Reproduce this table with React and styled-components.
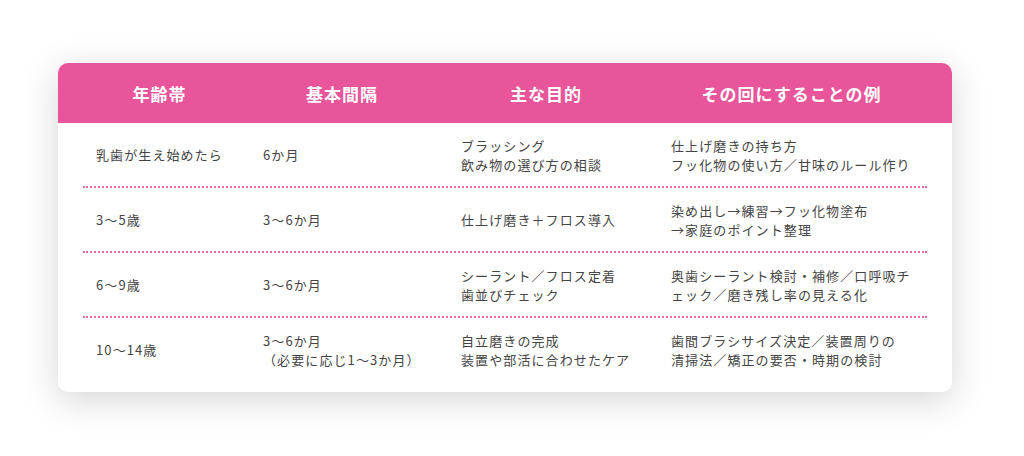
import React from 'react';
import styled, { createGlobalStyle } from 'styled-components';

const GlobalStyle = createGlobalStyle`
    html, body {
        margin: 0;
        padding: 0;
        background: #ffffff;
    }
    body {
        font-family: "Noto Sans CJK JP", "Noto Sans", sans-serif;
        color: #444444;
    }
`

const Page = styled.main`
    width: 1024px;
    height: 456px;
    padding: 63px 0 0 58px;
    box-sizing: border-box;
`

const Card = styled.section`
    width: 894px;
    background: #ffffff;
    border-radius: 10px;
    overflow: hidden;
    box-shadow: 0 8px 36px rgba(0, 0, 0, 0.17);
    padding-bottom: 11px;
`

const COLUMNS = '167px 198px 210px 269px';

const Header = styled.div`
    background: #e8559a;
    height: 60px;
    display: grid;
    grid-template-columns: ${COLUMNS};
    padding: 0 25px;
    align-items: center;
`

const HeadCell = styled.div`
    color: #ffffff;
    font-size: 17px;
    font-weight: 700;
    letter-spacing: 1px;
    text-align: center;
    padding-right: ${p => p.$shift || 0}px;
`

const Body = styled.div`
    padding: 0 25px;
`

const Row = styled.div`
    display: grid;
    grid-template-columns: ${COLUMNS};
    align-items: center;
    padding: 12.5px 0;
    min-height: 38px;
    border-bottom: ${p => p.$last ? 'none' : '2px dotted #e46aa8'};
`

const Cell = styled.div`
    font-size: 13px;
    letter-spacing: 1.1px;
    line-height: 19px;
    padding-left: 13px;
    white-space: nowrap;
    color: #444444;
`

const heads = [
    { label: '年齢帯', shift: 14 },
    { label: '基本間隔', shift: 14 },
    { label: '主な目的', shift: 14 },
    { label: 'その回にすることの例', shift: 2 },
];

const rows = [
    [['乳歯が生え始めたら'], ['6か月'], ['ブラッシング', '飲み物の選び方の相談'], ['仕上げ磨きの持ち方', 'フッ化物の使い方／甘味のルール作り']],
    [['3〜5歳'], ['3〜6か月'], ['仕上げ磨き＋フロス導入'], ['染め出し→練習→フッ化物塗布', '→家庭のポイント整理']],
    [['6〜9歳'], ['3〜6か月'], ['シーラント／フロス定着', '歯並びチェック'], ['奥歯シーラント検討・補修／口呼吸チ', 'ェック／磨き残し率の見える化']],
    [['10〜14歳'], ['3〜6か月', '（必要に応じ1〜3か月）'], ['自立磨きの完成', '装置や部活に合わせたケア'], ['歯間ブラシサイズ決定／装置周りの', '清掃法／矯正の要否・時期の検討']],
];

const App = () => {
    return (
        <>
            <GlobalStyle />
            <Page>
                <Card>
                    <Header>
                        {heads.map(h => (
                            <HeadCell key={h.label} $shift={h.shift}>{h.label}</HeadCell>
                        ))}
                    </Header>
                    <Body>
                        {rows.map((row, i) => (
                            <Row key={i} $last={i === rows.length - 1}>
                                {row.map((lines, j) => (
                                    <Cell key={j}>
                                        {lines.map((line, k) => (
                                            <div key={k}>{line}</div>
                                        ))}
                                    </Cell>
                                ))}
                            </Row>
                        ))}
                    </Body>
                </Card>
            </Page>
        </>
    )
}

export default App;
